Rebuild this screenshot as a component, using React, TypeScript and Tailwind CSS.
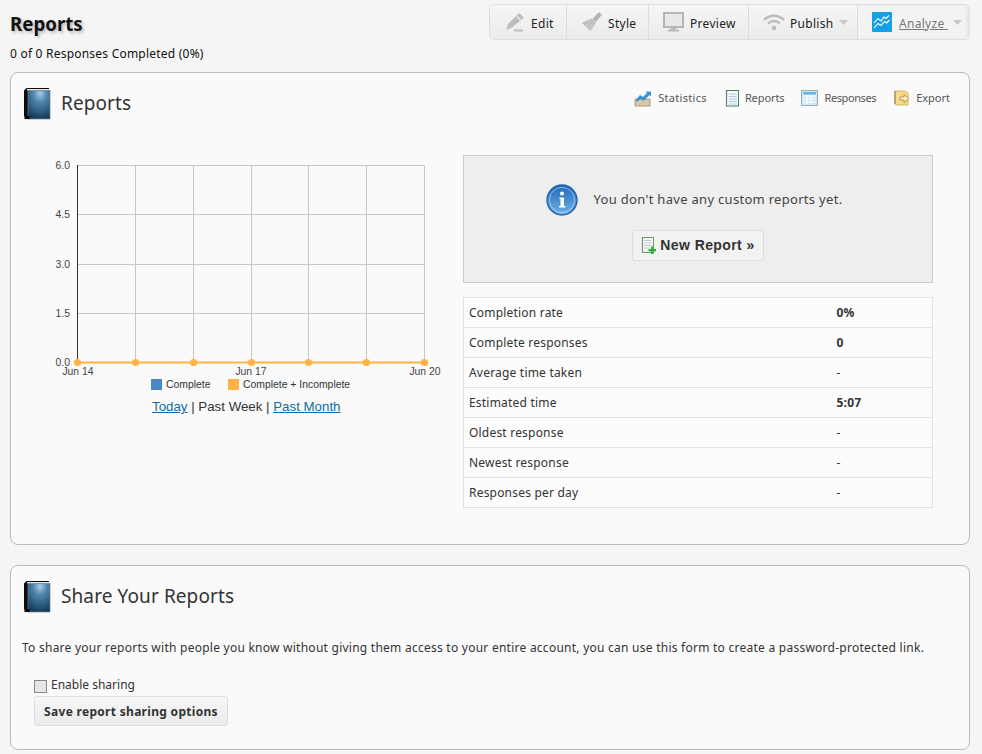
import React from "react";

const font = "font-['Noto_Sans','DejaVu_Sans',sans-serif]";
const arial = "font-['Liberation_Sans',Arial,sans-serif]";

const BookIcon = ({ id }: { id: string }) => (
  <svg width="28" height="33" viewBox="1 0 28 33" className="shrink-0">
    <defs>
      <radialGradient id={id} cx="0.55" cy="0.1" r="0.9">
        <stop offset="0" stopColor="#a9cbe8" />
        <stop offset="0.35" stopColor="#4f86ad" />
        <stop offset="1" stopColor="#143c5c" />
      </radialGradient>
    </defs>
    <path d="M1 3.5 3.5 1H26v2H5v28H3.5L1 29Z" fill="#0c0c0c" />
    <rect x="4" y="2" width="22" height="1.4" fill="#e8e8e8" />
    <rect x="5" y="3.5" width="22" height="28.5" fill={`url(#${id})`} stroke="#6f7f8a" strokeWidth="0.7" />
    <rect x="1.5" y="29" width="5" height="3" fill="#050505" />
  </svg>
);

const EditIcon = () => (
  <svg width="22" height="20" viewBox="0 0 22 20">
    <path d="M15 1 20 5.5 8 15.5 2 18l2-6Z" fill="#bdbdbd" />
    <path d="M13 4.5 16.5 8" stroke="#efefef" strokeWidth="1.4" />
    <rect x="10" y="17.5" width="9" height="2" fill="#bdbdbd" />
  </svg>
);

const StyleIcon = () => (
  <svg width="22" height="22" viewBox="0 0 22 22">
    <path d="M18 1 21 4 14.5 11 11.5 8Z" fill="#b4b4b4" />
    <path d="M10.5 7.5 15 12l-5.5 8L1 12Z" fill="#bcbcbc" />
    <path d="M4.5 15 10 10M6.5 17l5.5-5M8.5 18.5l4.5-5" stroke="#dedede" strokeWidth="0.8" />
  </svg>
);

const PreviewIcon = () => (
  <svg width="22" height="20" viewBox="0 0 22 20">
    <rect x="1" y="1" width="19" height="14" fill="#e9e9e9" stroke="#b5b5b5" strokeWidth="2" />
    <rect x="8" y="16" width="5" height="1.5" fill="#b5b5b5" />
    <rect x="5" y="17.5" width="11" height="2" fill="#b5b5b5" />
  </svg>
);

const PublishIcon = () => (
  <svg width="22" height="16" viewBox="0 0 22 16" fill="none" stroke="#bcbcbc" strokeWidth="2.4">
    <path d="M1 6a14 14 0 0 1 20 0" />
    <path d="M5 9.5a8.5 8.5 0 0 1 12 0" />
    <circle cx="11" cy="14" r="2.2" fill="#bcbcbc" stroke="none" />
  </svg>
);

const AnalyzeIcon = () => (
  <svg width="20" height="20" viewBox="0 0 20 20">
    <rect width="20" height="20" rx="1" fill="#15a0e4" />
    <path d="M2 11 6 6.5l3 2.5 3-4 2 1.5 3-3M2 16l4-4.5 3 2 3.5-4 2 1.5 3-3" fill="none" stroke="#fff" strokeWidth="1.1" />
  </svg>
);

const Caret = ({ color }: { color: string }) => (
  <svg width="9" height="5" viewBox="0 0 9 5" className="shrink-0">
    <path d="M0 0h9L4.5 5Z" fill={color} />
  </svg>
);

const StatisticsIcon = () => (
  <svg width="18" height="18" viewBox="0 0 18 18">
    <path d="M1 10h15v7H1Z" fill="#d8c8a8" stroke="#9c8a6c" strokeWidth="0.8" />
    <path d="M2 11 6 6l3 2 4-4-1.5-1.5H17v5l-1.5-1.5-6 6-3-2-3.5 3Z" fill="#3f8fd8" />
  </svg>
);

const NotebookIcon = () => (
  <svg width="14" height="17" viewBox="0 0 14 17">
    <rect x="1.5" y="0.5" width="12" height="15.5" fill="#f4f8ff" stroke="#3f8a50" />
    <path d="M4 4h8M4 6.5h8M4 9h8M4 11.5h8M4 14h8" stroke="#b4c0dc" strokeWidth="0.9" />
    <path d="M1.5 1v15" stroke="#888" strokeWidth="1.6" strokeDasharray="1 1" />
  </svg>
);

const ResponsesIcon = () => (
  <svg width="17" height="16" viewBox="0 0 17 16">
    <rect x="0.5" y="0.5" width="16" height="15" fill="#cfe6f5" stroke="#9ab0b0" />
    <rect x="2" y="2" width="13" height="2.5" fill="#66b4e0" />
    <path d="M2 6h13M2 9h13M2 12h13M6 5v9M10 5v9" stroke="#fff" strokeWidth="1" />
  </svg>
);

const ExportIcon = () => (
  <svg width="16" height="18" viewBox="0 0 16 18">
    <path d="M1 2h9l4 2v12H3l-2-1Z" fill="#f5d98c" stroke="#cfa850" strokeWidth="0.8" />
    <path d="M1 2v13" stroke="#9a8a60" strokeWidth="1.2" />
    <path d="M6 8h4V5.5l5 4-5 4V11H6Z" fill="#fbeec0" stroke="#b08a30" strokeWidth="0.8" />
  </svg>
);

const InfoIcon = () => (
  <svg width="32" height="32" viewBox="0 0 32 32">
    <defs>
      <linearGradient id="infoFill" x1="0" y1="0" x2="0" y2="1">
        <stop offset="0" stopColor="#1f6ab8" />
        <stop offset="1" stopColor="#6fb0e6" />
      </linearGradient>
    </defs>
    <circle cx="16" cy="16" r="15" fill="url(#infoFill)" stroke="#1f65ad" strokeWidth="1.4" />
    <circle cx="16" cy="16" r="12.6" fill="none" stroke="#fff" strokeWidth="1" opacity="0.45" />
    <circle cx="16" cy="9.5" r="2" fill="#fff" />
    <path d="M13.5 13.5H18V22h1.5v1.5h-6.5V22h1.5v-7h-1Z" fill="#fff" />
  </svg>
);

const NewReportIcon = () => (
  <svg width="16" height="17" viewBox="0 0 16 17">
    <rect x="1.5" y="0.5" width="11" height="15" fill="#f4f8f0" stroke="#5f9f60" />
    <path d="M3.5 3.5h7M3.5 6h7M3.5 8.5h7M3.5 11h5" stroke="#b8c0cc" strokeWidth="0.9" />
    <path d="M1.5 1v15" stroke="#888" strokeWidth="1.4" strokeDasharray="1 1" />
    <path d="M10 9.5h2.5V12H15v2.2h-2.5V17H10v-2.8H7.5V12H10Z" fill="#2fae3a" />
  </svg>
);

const Chart = () => {
  const xs = [77.5, 135.5, 193.5, 251.5, 308.5, 366.5, 424.5];
  const ys = [165.5, 214.5, 264.5, 313.5];
  const labels = ["6.0", "4.5", "3.0", "1.5", "0.0"];
  return (
    <svg width="440" height="240" viewBox="40 155 440 240" className="block">
      {ys.map((y) => (
        <line key={y} x1="77" x2="425" y1={y} y2={y} stroke="#c8c8c8" />
      ))}
      {xs.slice(1).map((x) => (
        <line key={x} x1={x} x2={x} y1="165" y2="362" stroke="#c8c8c8" />
      ))}
      <line x1="77.5" x2="77.5" y1="165" y2="362" stroke="#333" />
      <g fontFamily="'Liberation Sans', Arial, sans-serif" fontSize="10.4" fill="#444">
        {[165, 214, 264, 313, 362].map((y, i) => (
          <text key={y} x="70" y={y + 3.5} textAnchor="end">
            {labels[i]}
          </text>
        ))}
        <text x="78" y="375" textAnchor="middle">Jun 14</text>
        <text x="251" y="375" textAnchor="middle">Jun 17</text>
        <text x="425" y="375" textAnchor="middle">Jun 20</text>
        <rect x="151" y="379" width="11" height="11" fill="#4a86c8" />
        <text x="166" y="388" fill="#333">Complete</text>
        <rect x="228" y="379" width="11" height="11" fill="#ffb347" />
        <text x="243" y="388" fill="#333">Complete + Incomplete</text>
      </g>
      <line x1="77" x2="425" y1="362.5" y2="362.5" stroke="#ffb347" strokeWidth="2" />
      {xs.map((x) => (
        <circle key={x} cx={x} cy="362.5" r="3.6" fill="#ffb347" />
      ))}
    </svg>
  );
};

const ToolbarItem = ({
  icon,
  label,
  width,
  caret,
  active,
  last,
}: {
  icon: React.ReactNode;
  label: string;
  width: string;
  caret?: boolean;
  active?: boolean;
  last?: boolean;
}) => (
  <div
    className={`flex h-full items-center pl-[14px] ${width} ${last ? "" : "border-r border-[#dcdcdc]"} ${
      active ? "bg-[#f3f3f3] shadow-[inset_-2px_0_3px_#e4e4e4]" : "bg-gradient-to-b from-[#f6f6f6] to-[#ebebeb]"
    }`}
  >
    <span className="flex w-[27px] shrink-0 items-center">{icon}</span>
    <span className={`pt-[3px] tracking-[0.3px] ${active ? "text-[#777] underline" : "text-[#222]"}`}>
      {label}
      {active ? "\u00a0" : ""}
    </span>
    {caret && (
      <span className="ml-[5px]">
        <Caret color="#c8c8c8" />
      </span>
    )}
  </div>
);

const ReportLink = ({
  icon,
  label,
  className,
}: {
  icon: React.ReactNode;
  label: string;
  className: string;
}) => (
  <div className={`flex items-center ${className}`}>
    {icon}
    <span className="ml-[6px]">{label}</span>
  </div>
);

const rows: [string, string, boolean][] = [
  ["Completion rate", "0%", true],
  ["Complete responses", "0", true],
  ["Average time taken", "-", false],
  ["Estimated time", "5:07", true],
  ["Oldest response", "-", false],
  ["Newest response", "-", false],
  ["Responses per day", "-", false],
];

export default function App() {
  return (
    <div className={`${font} h-[754px] w-[982px] overflow-hidden bg-[#f5f5f5] text-[12px] text-[#222]`}>
      <div className="flex h-[72px] items-start justify-between pl-[10px] pr-[12px]">
        <div>
          <h1 className="mt-[12px] text-[18.7px] leading-[24px] font-bold text-[#111] [text-shadow:2px_2px_3px_#bbb]">
            Reports
          </h1>
          <p className="mt-[10px] text-[12px] leading-[16px] tracking-[0.22px] text-[#111]">
            0 of 0 Responses Completed (0%)
          </p>
        </div>
        <div className="mt-[4px] flex h-[36px] w-[481px] overflow-hidden rounded-[5px] border border-[#dedede] text-[12px]">
          <ToolbarItem icon={<EditIcon />} label="Edit" width="w-[77px]" />
          <ToolbarItem icon={<StyleIcon />} label="Style" width="w-[82px]" />
          <ToolbarItem icon={<PreviewIcon />} label="Preview" width="w-[100px]" />
          <ToolbarItem icon={<PublishIcon />} label="Publish" width="w-[109px]" caret />
          <ToolbarItem icon={<AnalyzeIcon />} label="Analyze" width="flex-1" caret active last />
        </div>
      </div>

      <section className="ml-[10px] mr-[12px] h-[473px] rounded-[8px] border border-[#bbb] bg-[#fafafa]">
        <div className="flex h-[82px] items-start justify-between pl-[13px] pr-[19px] pt-[14px]">
          <div className="flex items-center gap-[9px]">
            <BookIcon id="book1" />
            <h2 className="text-[19px] leading-[33px] tracking-[0.1px] text-[#333]">Reports</h2>
          </div>
          <div className="mt-[2px] flex items-center text-[11px] text-[#555]">
            <ReportLink icon={<StatisticsIcon />} label="Statistics" className="tracking-[0.3px]" />
            <ReportLink icon={<NotebookIcon />} label="Reports" className="ml-[18px] tracking-[-0.1px]" />
            <ReportLink icon={<ResponsesIcon />} label="Responses" className="ml-[17px] tracking-[-0.4px]" />
            <ReportLink icon={<ExportIcon />} label="Export" className="ml-[18px]" />
          </div>
        </div>
        <div className="flex pl-[29px]">
          <div className="w-[423px]">
            <Chart />
            <p className={`${arial} mt-[2px] pl-[112px] text-[13.3px] leading-[20px] text-[#333]`}>
              <a className="text-[#0b6ca8] underline">Today</a> | Past Week |{" "}
              <a className="text-[#0b6ca8] underline">Past Month</a>
            </p>
          </div>
          <div className="w-[470px]">
            <div className="flex h-[128px] flex-col items-center border border-[#ccc] bg-[#eee] pt-[28px]">
              <div className="-ml-[8px] flex items-center gap-[16px] text-[13px] tracking-[0.3px] text-[#444]">
                <InfoIcon />
                <span>You don't have any custom reports yet.</span>
              </div>
              <button className={`${arial} mt-[14px] flex h-[31px] w-[132px] items-center justify-center gap-[3px] rounded-[3px] border border-[#ddd] bg-[#f2f2f2] text-[14px] font-bold tracking-[0.4px] text-[#333]`}>
                <NewReportIcon />
                New Report »
              </button>
            </div>
            <table className="mt-[14px] w-full border-collapse bg-[#fcfcfc] text-[12px] tracking-[0.2px] text-[#333]">
              <tbody>
                {rows.map(([label, value, strong]) => (
                  <tr key={label} className="h-[30px] border border-[#e0e0e0]">
                    <td className="pl-[5px]">{label}</td>
                    <td className={`w-[96px] ${strong ? "font-bold" : ""}`}>{value}</td>
                  </tr>
                ))}
              </tbody>
            </table>
          </div>
        </div>
      </section>

      <section className="ml-[10px] mr-[12px] mt-[20px] h-[185px] rounded-[8px] border border-[#bbb] bg-[#fafafa]">
        <div className="flex items-center gap-[9px] pl-[13px] pt-[14px]">
          <BookIcon id="book2" />
          <h2 className="text-[19px] leading-[33px] tracking-[0.1px] text-[#333]">Share Your Reports</h2>
        </div>
        <p className="mt-[27px] pl-[11px] text-[12px] leading-[16px] tracking-[0.25px] text-[#333]">
          To share your reports with people you know without giving them access to your entire account, you can use this form to create a password-protected link.
        </p>
        <div className="mt-[20px] pl-[23px]">
          <label className="flex h-[18px] items-center gap-[4px] text-[12px] text-[#333]">
            <input type="checkbox" className="mt-[2px] h-[13px] w-[13px] appearance-none border border-[#888] bg-[#e6e6e6]" />
            Enable sharing
          </label>
          <button className="mt-[2px] flex h-[30px] w-[194px] items-center justify-center rounded-[3px] border border-[#ddd] bg-gradient-to-b from-[#f7f7f7] to-[#ebebeb] pt-[1px] text-[12px] font-bold tracking-[0.3px] text-[#333]">
            Save report sharing options
          </button>
        </div>
      </section>
    </div>
  );
}
